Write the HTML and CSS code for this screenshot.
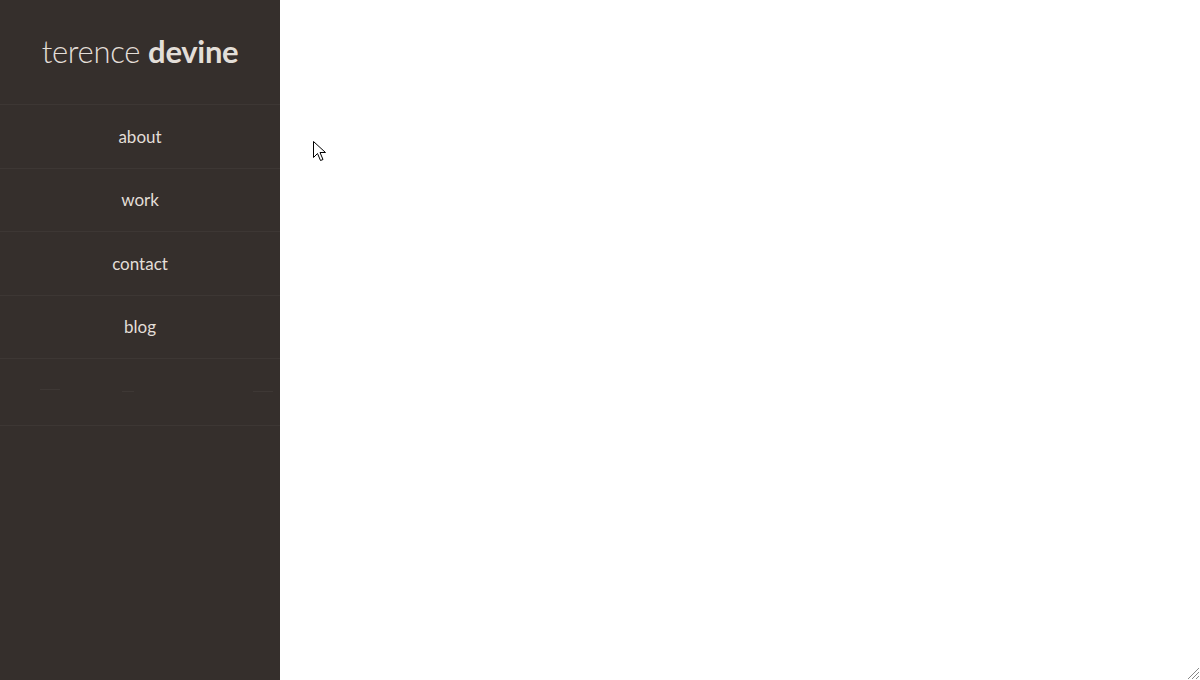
FILE: index.html
```html
<!DOCTYPE html>
<html>
<head>
<meta charset="utf-8">
<link rel="stylesheet" href="styles.css">
</head>
<body>
<div class="page">
  <aside class="sidebar">
    <header class="brand"><span class="light">terence</span> <span class="bold">devine</span></header>
    <nav class="nav">
      <a class="nav-item" href="#">about</a>
      <a class="nav-item" href="#">work</a>
      <a class="nav-item" href="#">contact</a>
      <a class="nav-item" href="#">blog</a>
      <div class="nav-social">
        <span class="mark mark-a"></span>
        <span class="mark mark-b"></span>
        <span class="mark mark-c"></span>
      </div>
    </nav>
  </aside>
  <main class="content"></main>
</div>
<svg class="cursor" width="14" height="22" viewBox="0 0 14 22"><path d="M0.5 0.5 L0.5 16.5 L4.5 12.5 L7.5 19.5 L10 18.5 L7 11.5 L12.5 11.5 Z" fill="#fff" stroke="#000" stroke-width="1"/></svg>
<svg class="grip" width="14" height="14" viewBox="0 0 14 14"><path d="M13 2 L2 13 M13 6 L6 13 M13 10 L10 13" stroke="#888" stroke-width="1"/></svg>
</body>
</html>
```

FILE: styles.css
```css
html, body { margin: 0; padding: 0; height: 100%; }
body { background: #fff; font-family: Lato, "Open Sans", sans-serif; }
.page { display: flex; height: 680px; }
.sidebar { width: 280px; background: #352f2c; color: #e3ded8; display: flex; flex-direction: column; }
.brand { height: 105px; box-sizing: border-box; display: flex; align-items: center; justify-content: center; font-size: 31px; letter-spacing: -0.3px; border-bottom: 1px solid #3d3734; padding-bottom: 3px; }
.brand .light { font-weight: 300; }
.brand .bold { font-weight: 700; margin-left: 8px; }
.nav { display: flex; flex-direction: column; }
.nav-item { display: flex; align-items: center; justify-content: center; height: 63.5px; box-sizing: border-box; border-bottom: 1px solid #3d3734; color: #e3ded8; text-decoration: none; font-size: 17px; }
.nav-social { height: 67px; box-sizing: border-box; border-bottom: 1px solid #3d3734; position: relative; }
.mark { position: absolute; height: 1px; background: #3e3835; }
.mark-a { left: 40px; top: 30px; width: 20px; }
.mark-b { left: 122px; top: 32px; width: 12px; }
.mark-c { left: 253px; top: 32px; width: 20px; }
.content { flex: 1; background: #fff; }
.cursor { position: absolute; left: 313px; top: 141px; }
.grip { position: absolute; right: 0; bottom: 0; }
```
